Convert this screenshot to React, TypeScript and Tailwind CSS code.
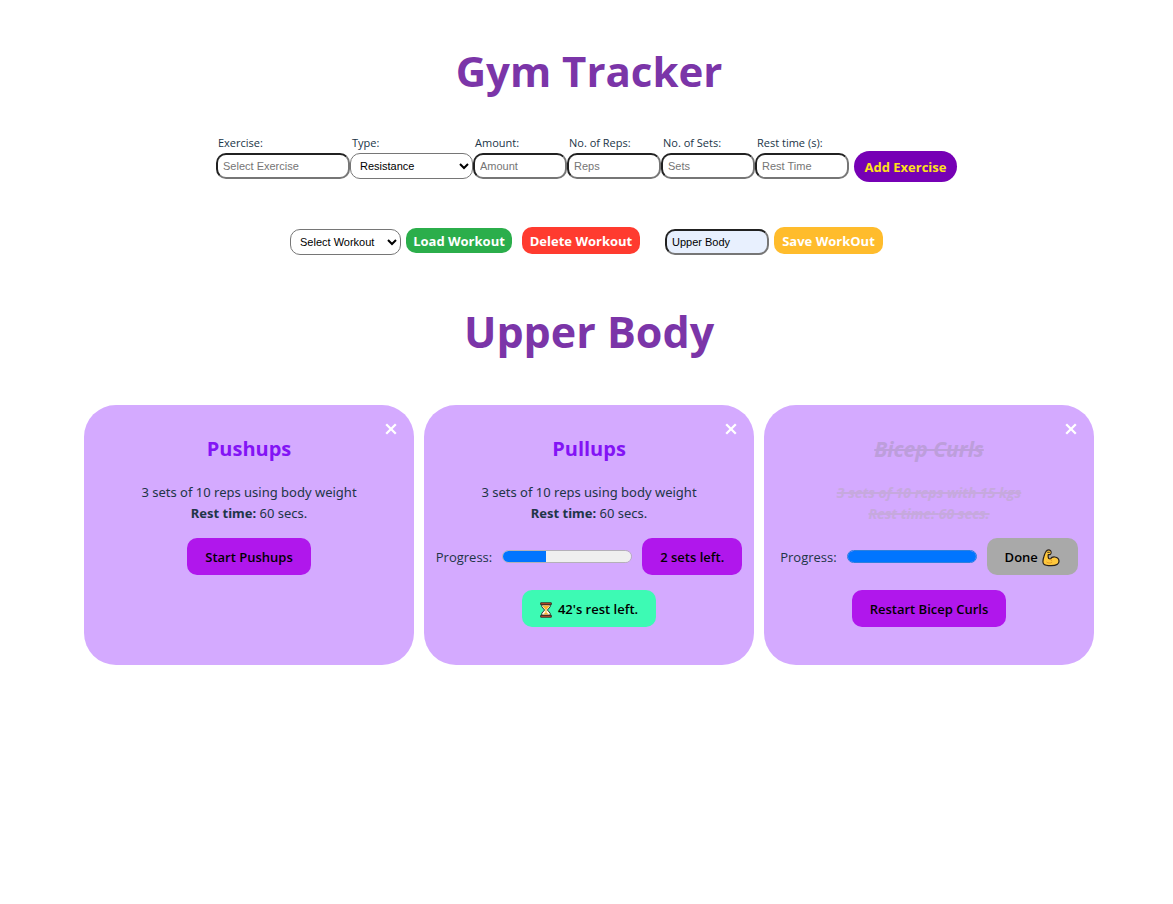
import type { ReactNode } from 'react';

const inputBase =
  'h-[26px] rounded-[10px] border-2 border-[#767676] [border-style:inset] px-[5px] text-[11px] text-black outline-none placeholder:text-[#757575] font-["Liberation_Sans",Arial,sans-serif]';
const selectBase =
  'h-[26px] rounded-[10px] border border-[#767676] bg-white px-[5px] text-[11px] text-black font-["Liberation_Sans",Arial,sans-serif]';
const actionButton =
  'flex h-[37px] cursor-pointer items-center justify-center rounded-[10px] px-[18px] pt-[2px] text-[13px] font-semibold whitespace-nowrap text-black';
const toolbarButton =
  'cursor-pointer rounded-[10px] pt-[2px] text-[13px] font-bold whitespace-nowrap text-white';

function Field({ id, label, children }: { id: string; label: string; children: ReactNode }) {
  return (
    <div className="flex flex-col">
      <label htmlFor={id} className="px-[2px] text-[11px] leading-[20px]">
        {label}
      </label>
      {children}
    </div>
  );
}

function Hourglass() {
  return (
    <svg viewBox="0 0 12 16" className="h-4 w-3" aria-hidden="true">
      <path d="M1.800 2.600h8.400v2.200L7.400 8l2.800 3.200v2.200H1.800v-2.200L4.600 8 1.800 4.800z" fill="#fff6e6" stroke="#2a2420" strokeWidth=".9" />
      <path d="M2.800 3.600h6.400v1L6.500 7.400v3.200l2.400 1.900H3.100l2.400-1.900V7.400L2.800 4.600z" fill="#f9b52e" />
      <path d="M.7.800h10.600v1.900H.7zM.7 13.300h10.600v1.900H.7z" fill="#d9502c" stroke="#2a2420" strokeWidth=".9" strokeLinejoin="round" />
    </svg>
  );
}

function Biceps() {
  return (
    <svg viewBox="0 0 18 18" className="h-[18px] w-[18px]" aria-hidden="true">
      <path
        d="M5 1.400C6 .9 7.800 1 8.500 1.700c.8.900.8 2.700 0 3.500-.6.500-1.500.500-2.200.3-.3 1.300-.2 2.700.4 4 .6.100 1.100.300 1.600.600.900-1.500 2.600-2.300 4.500-2.100 2.600.300 4.200 2 4.200 4.300 0 3-3.400 4.400-7.800 4.400-3.500 0-6.500-.5-7.600-1.800-1-1.300-.7-4.300.3-7.400C2.700 4.800 3.700 2.200 5 1.400z"
        fill="#ffc83d"
        stroke="#2b2118"
        strokeWidth="1.200"
        strokeLinejoin="round"
      />
      <path d="M8.300 10.100c.7.400 1.100 1 1.300 1.700M4.800 13.200c1.500 1.100 3.400 1.200 5 .3" fill="none" stroke="#e39a24" strokeWidth="1" strokeLinecap="round" />
      <path d="M5.600 3.300h1.800" fill="none" stroke="#2b2118" strokeWidth=".9" strokeLinecap="round" />
    </svg>
  );
}

function Card({ title, done, detail, rest, children }: {
  title: string;
  done?: boolean;
  detail: string;
  rest: number;
  children: ReactNode;
}) {
  return (
    <article className="relative flex min-h-[260px] w-[330px] flex-col items-center rounded-[32px] bg-[#d4aaff] pt-7">
      <button type="button" aria-label={`Remove ${title}`} className="absolute top-4 right-[15px] flex h-4 w-4 cursor-pointer items-center justify-center">
        <svg viewBox="0 0 12 12" className="h-3 w-3" aria-hidden="true">
          <path d="M1.200 1.200l9.600 9.600M10.800 1.200l-9.600 9.600" stroke="#fff" strokeWidth="2.300" />
        </svg>
      </button>
      <h2 className={done ? 'text-[21px] leading-8 font-bold text-[#bd9edb] italic line-through' : 'text-[20px] leading-8 font-bold text-[#8314f5]'}>
        {title}
      </h2>
      <p className={done ? "mt-[17px] text-center font-['Open_Sans','Noto_Sans',sans-serif] text-[14px] leading-[21px] font-bold text-[#c6a9dd] italic line-through decoration-2" : "mt-[17px] text-center font-['Noto_Sans','Open_Sans',sans-serif] text-[13px] leading-[21px]"}>
        {detail}
        <br />
        <strong className="font-bold">Rest time:</strong> {rest} secs.
      </p>
      <div className="mt-[14px] flex flex-col items-center gap-[15px]">{children}</div>
    </article>
  );
}

function ProgressRow({ id, value, max, children }: { id: string; value: number; max: number; children: ReactNode }) {
  const border = value === max ? 'border-[#2f7fdc]' : 'border-[#b4b0b8]';
  return (
    <div className="flex items-center gap-[10px]">
      <label htmlFor={id} className="pt-[2px] text-[13px]">Progress:</label>
      <progress
        id={id}
        value={value}
        max={max}
        className={`h-[13px] w-[130px] appearance-none overflow-hidden rounded-full border ${border} bg-[#efefef] [&::-webkit-progress-bar]:bg-[#efefef] [&::-webkit-progress-value]:bg-[#0075ff]`}
      />
      {children}
    </div>
  );
}

export default function App() {
  return (
    <main className="min-h-screen bg-white pt-[43px] font-['Open_Sans','Noto_Sans',sans-serif] text-[#213547]">
      <h1 className="pl-[5px] text-center text-[42px] leading-[56px] font-bold text-[#7b35a8]">Gym Tracker</h1>

      <form className="mt-[34px] flex flex-wrap items-end justify-center" onSubmit={(e) => e.preventDefault()}>
        <Field id="exercise" label="Exercise:">
          <input id="exercise" placeholder="Select Exercise" className={`${inputBase} w-[134px]`} />
        </Field>
        <Field id="type" label="Type:">
          <select id="type" className={`${selectBase} w-[123px]`}>
            <option>Resistance</option>
            <option>Cardio</option>
          </select>
        </Field>
        <Field id="amount" label="Amount:">
          <input id="amount" placeholder="Amount" className={`${inputBase} w-[94px]`} />
        </Field>
        <Field id="reps" label="No. of Reps:">
          <input id="reps" placeholder="Reps" className={`${inputBase} w-[94px]`} />
        </Field>
        <Field id="sets" label="No. of Sets:">
          <input id="sets" placeholder="Sets" className={`${inputBase} w-[94px]`} />
        </Field>
        <Field id="rest" label="Rest time (s):">
          <input id="rest" placeholder="Rest Time" className={`${inputBase} w-[94px]`} />
        </Field>
        <button type="submit" className="-mb-[3px] ml-[5px] h-[31px] w-[103px] cursor-pointer rounded-full bg-[#7600b5] pt-[2px] text-[13px] font-bold whitespace-nowrap text-[#ffe119]">
          Add Exercise
        </button>
      </form>

      <div className="mt-12 flex flex-wrap items-start justify-center">
        <select aria-label="Select Workout" className={`${selectBase} mt-[2px] mr-[5px] w-[111px]`}>
          <option>Select Workout</option>
          <option>Upper Body</option>
        </select>
        <button type="button" className={`${toolbarButton} mt-px mr-[10px] h-[25px] w-[106px] bg-[#2bae4b]`}>Load Workout</button>
        <button type="button" className={`${toolbarButton} mr-[25px] h-[27px] w-[118px] bg-[#ff3b2f]`}>Delete Workout</button>
        <input aria-label="Workout name" defaultValue="Upper Body" className={`${inputBase} mt-[2px] mr-[5px] w-[104px] bg-[#e8f0fe]`} />
        <button type="button" className={`${toolbarButton} h-[27px] w-[109px] bg-[#ffbc2c]`}>Save WorkOut</button>
      </div>

      <h1 className="mt-[49px] pl-[5px] text-center text-[43px] leading-[56px] font-bold text-[#7b35a8]">Upper Body</h1>

      <section className="mt-[45px] flex flex-wrap justify-center gap-[10px] pl-[5px]">
        <Card title="Pushups" detail="3 sets of 10 reps using body weight" rest={60}>
          <button type="button" className={`${actionButton} bg-[#b017ec]`}>Start Pushups</button>
        </Card>
        <Card title="Pullups" detail="3 sets of 10 reps using body weight" rest={60}>
          <ProgressRow id="pullups-progress" value={1} max={3}>
            <button type="button" className={`${actionButton} bg-[#b017ec]`}>2 sets left.</button>
          </ProgressRow>
          <button type="button" className={`${actionButton} gap-[6px] bg-[#3dfab4]`}>
            <Hourglass />
            42's rest left.
          </button>
        </Card>
        <Card title="Bicep Curls" done detail="3 sets of 10 reps with 15 kgs" rest={60}>
          <ProgressRow id="curls-progress" value={3} max={3}>
            <button type="button" className={`${actionButton} gap-1 bg-[#a9a9a9]`}>
              Done
              <Biceps />
            </button>
          </ProgressRow>
          <button type="button" className={`${actionButton} bg-[#b017ec]`}>Restart Bicep Curls</button>
        </Card>
      </section>
    </main>
  );
}
